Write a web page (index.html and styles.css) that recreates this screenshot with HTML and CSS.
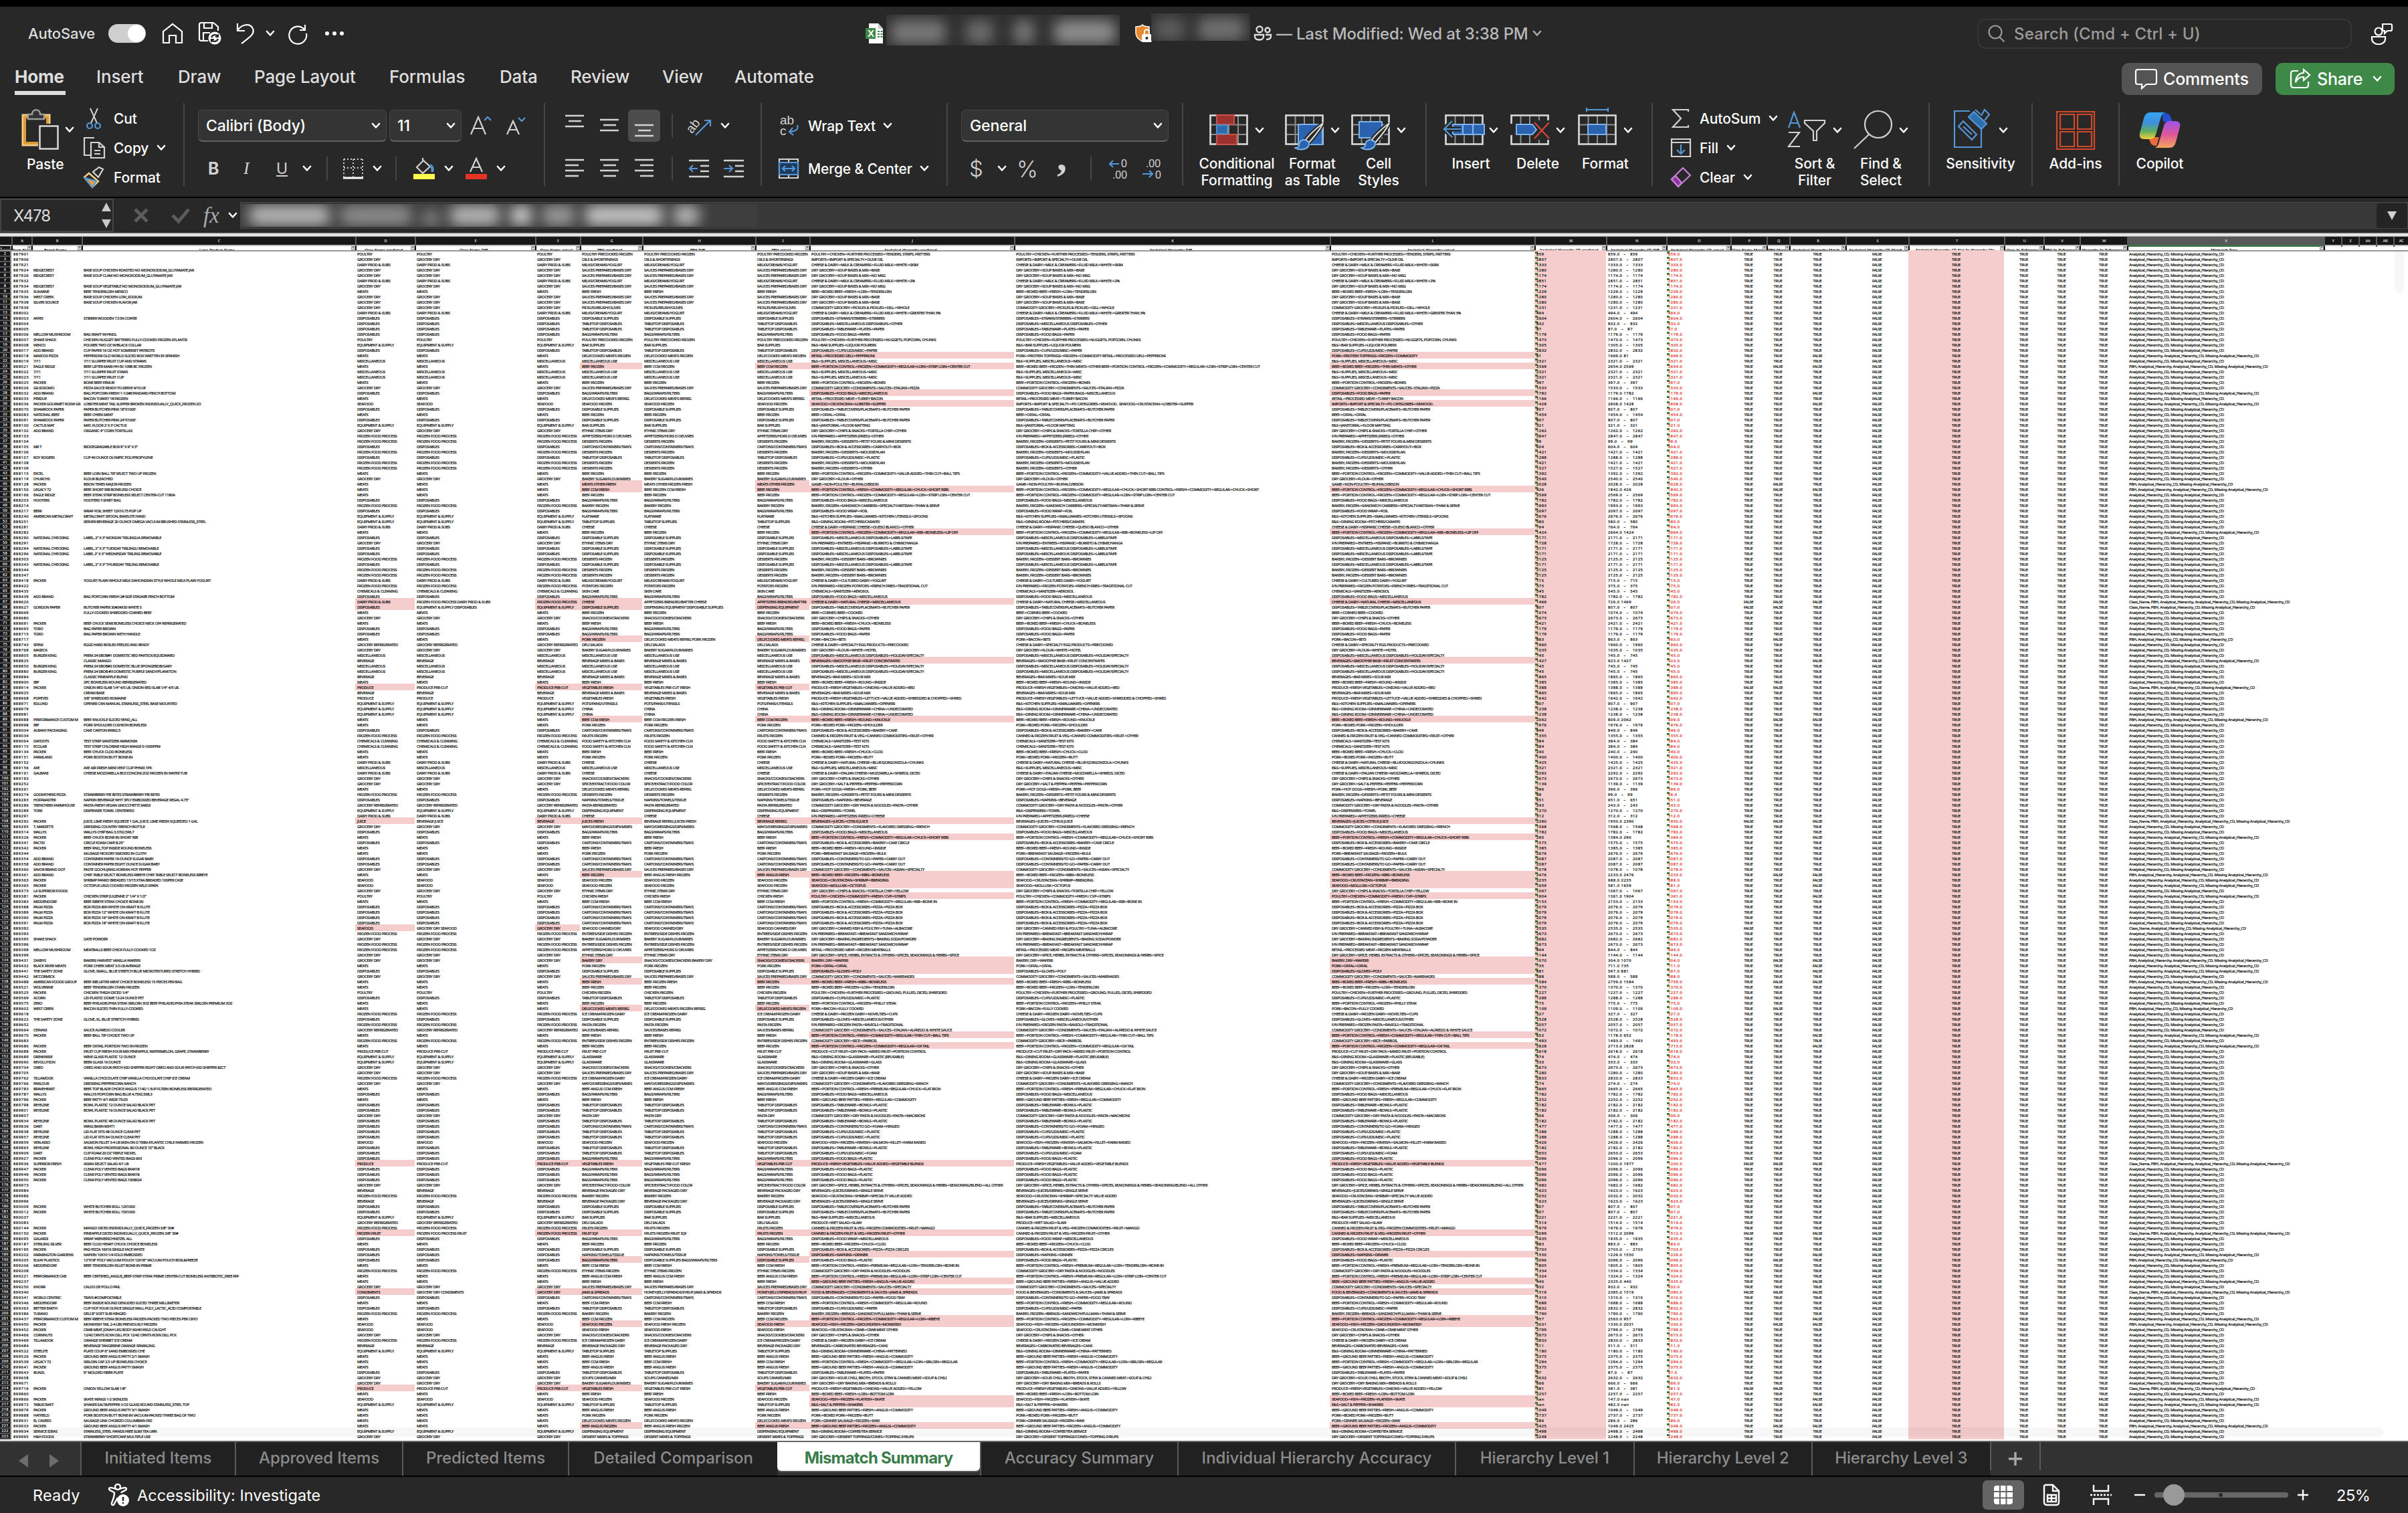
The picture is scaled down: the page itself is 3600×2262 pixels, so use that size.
FILE: index.html
```html
<!DOCTYPE html>
<html lang="en">
<head>
<meta charset="utf-8">
<title>Mismatch Summary</title>
<link rel="stylesheet" href="styles.css">
</head>
<body>
<svg class="defs" width="0" height="0">
  <symbol id="chev" viewBox="0 0 14 10"><path d="M2 2l5 5.5L12 2" fill="none" stroke="currentColor" stroke-width="2.6" stroke-linecap="round" stroke-linejoin="round"/></symbol>
  <symbol id="table" viewBox="0 0 58 46"><path d="M1.500 1.500h55v43h-55zM1 15.500h56M1 30h56M15.500 1v44M29 1v44M43 1v44" fill="none" stroke="#8d8d8d" stroke-width="2"/><path d="M1.500 1.500h55v43h-55z" fill="none" stroke="#d6d6d6" stroke-width="2.600"/></symbol>
  <symbol id="brush" viewBox="0 0 46 42"><path d="M43 1C34 8 22 19 17 26l5 4C29 22 39 10 43 1z" fill="#282828" stroke="#282828" stroke-width="6"/><path d="M43 1C34 8 22 19 17 26l5 4C29 22 39 10 43 1z" fill="#282828" stroke="#dcdcdc" stroke-width="2"/><path d="M16 26c-8-1-9 6-9 9-1 3-4 3-6 3 6 4 22 4 21-8z" fill="#2a62b0" stroke="#7db3ea" stroke-width="2"/></symbol>
</svg>

<header class="titlebar">
  <div class="quick">
    <span class="autosave">AutoSave</span>
    <span class="toggle"><i></i></span>
    <svg class="q-home" width="32" height="32" viewBox="0 0 32 32"><path d="M2 13L16 2l14 11v17h-9V19h-10v11H2z"/></svg>
    <svg class="q-save" width="36" height="36" viewBox="0 0 36 36"><path d="M15 29H5a3 3 0 0 1-3-3V5a3 3 0 0 1 3-3h18l7 6v6M9 2v8h12V2M8 28V17h10"/><circle cx="25" cy="25" r="9.500" fill="#fff" stroke="none"/><path d="M20 24c2-5 8-5 10-1m0-4v4h-4M30 26c-2 5-8 5-10 1m0 4v-4h4" stroke="#282828"/></svg>
    <svg class="q-undo" width="30" height="34" viewBox="0 0 30 34"><path d="M3 2v11h11M3 13C8 4 20 1 25 8c6 9-4 15-16 24"/></svg>
    <svg class="chev q-c"><use href="#chev"/></svg>
    <svg class="q-redo" width="32" height="32" viewBox="0 0 32 32"><path d="M27 3v8h-8M26 10A13 13 0 1 0 29 16"/></svg>
    <span class="dots"><i></i><i></i><i></i></span>
  </div>
  <div class="doc">
    <svg width="27" height="32" viewBox="0 0 27 32"><path d="M5 1h14l7 8v22H5z" fill="#fff"/><path d="M19 1v8h7z" fill="#ccc"/><path d="M18 12h3v2h-3zm4.500 0h3v2h-3zM18 16h3v2h-3zm4.500 0h3v2h-3zM18 20h3v2h-3zm4.500 0h3v2h-3z" fill="#3b8748"/><rect y="8" width="15" height="16" fill="#3b8748"/><text x="3" y="21" class="xl">X</text></svg>
    <span class="smudge name"><i></i><i></i><i></i><i></i></span>
    <svg class="shield" width="26" height="28" viewBox="0 0 26 28"><path d="M11 1c3 3 6 3 10 3v9c0 6-4 10-10 13C5 23 1 19 1 13V4c4 0 7 0 10-3z" fill="#e8882e" stroke="#fff" stroke-width="1.500"/><path d="M14 15v-3c0-5 7-5 7 0v3" fill="none" stroke="#fff" stroke-width="2"/><rect x="10" y="15" width="15" height="12" rx="2" fill="#fff"/><circle cx="17.500" cy="21" r="2" fill="#222"/></svg>
    <span class="smudge label"><i></i><i></i></span>
    <svg class="people" width="28" height="24" viewBox="0 0 28 24"><circle cx="9" cy="6" r="4.500"/><circle cx="21" cy="7" r="3.500"/><path d="M2 14h13v3c0 6-13 6-13 0zM18 14h8v2c0 4-3 5-7 5"/></svg>
    <span class="modified">— Last Modified: Wed at 3:38 PM</span>
    <svg class="chev dim"><use href="#chev"/></svg>
  </div>
  <div class="search">
    <svg width="27" height="28" viewBox="0 0 27 28"><circle cx="12" cy="11" r="9.500"/><path d="M18.500 18.500l7 7"/></svg>
    <span>Search (Cmd + Ctrl + U)</span>
  </div>
  <svg class="presence" width="34" height="34" viewBox="0 0 34 34"><circle cx="12" cy="13" r="5.500"/><path d="M2 21h20v3c0 11-20 11-20 0zM18 2h12q2 0 2 2v6q0 2-2 2h-5l-4 4v-4h-3z"/></svg>
</header>

<nav class="menubar">
  <b class="m-home">Home</b><span class="m-insert">Insert</span><span class="m-draw">Draw</span><span class="m-page">Page Layout</span><span class="m-form">Formulas</span><span class="m-data">Data</span><span class="m-rev">Review</span><span class="m-view">View</span><span class="m-auto">Automate</span>
  <div class="actions">
    <button class="comments"><svg width="34" height="32" viewBox="0 0 34 32"><path d="M4 2h25q3 0 3 3v16q0 3-3 3H17l-7 6v-6H4q-3 0-3-3V5q0-3 3-3z"/></svg>Comments</button>
    <button class="share"><svg width="32" height="32" viewBox="0 0 32 32"><path d="M13 4H6Q2 4 2 8v17q0 4 4 4h18q4 0 4-4v-5M21 2l9 8-9 8v-5c-6 0-9 2-12 8 0-8 5-14 12-14z"/></svg>Share<svg class="chev"><use href="#chev"/></svg></button>
  </div>
</nav>

<section class="ribbon">
  <div class="group clip">
    <div class="paste">
      <div class="row"><svg width="56" height="62" viewBox="0 0 56 62"><path d="M25 54H2V9h40v13" fill="none" stroke="#f2cf8b" stroke-width="3"/><path d="M25 51H5V12h34v10" fill="none" stroke="#e09a38" stroke-width="4"/><path d="M10 15V8h6c0-9 12-9 12 0h6v7z" fill="#333" stroke="#9a9a9a" stroke-width="2.500"/><path d="M27.500 25.500h27v34h-27z" fill="#282828" stroke="#d8d8d8" stroke-width="2.500"/></svg><svg class="chev"><use href="#chev"/></svg></div>
      <span>Paste</span>
    </div>
    <div class="stack">
      <div><svg width="34" height="34" viewBox="0 0 34 34"><path d="M11 2l10 22M22 2L12 24" fill="none" stroke="#cfcfcf" stroke-width="2"/><circle cx="10" cy="28" r="4"/><circle cx="22" cy="28" r="4"/></svg><span>Cut</span></div>
      <div><svg width="34" height="34" viewBox="0 0 34 34"><path d="M11 28H2V2h15" class="g"/><path d="M12 9h12l8 7v16H12zM24 9v7h8M17 21h9M17 26h9" class="g"/></svg><span>Copy</span><svg class="chev"><use href="#chev"/></svg></div>
      <div><svg width="34" height="34" viewBox="0 0 34 34"><path d="M9 11l14 12-9 9L2 17z" fill="#282828" stroke="#f0cf8a" stroke-width="2.500"/><path d="M3 18l17 5-6 9z" fill="#e3a040"/><path d="M15 9l9-7 6 3-7 12z" class="g"/></svg><span>Format</span></div>
    </div>
  </div>

  <div class="group font">
    <div class="line top">
      <span class="select face">Calibri (Body)<svg class="chev"><use href="#chev"/></svg></span>
      <span class="select size">11<svg class="chev"><use href="#chev"/></svg></span>
      <svg class="grow" width="34" height="32" viewBox="0 0 34 32"><path d="M2 29L13 3l11 26M6 20h14" class="g"/><path d="M22 8l5-5 5 5"/></svg>
      <svg class="shrink" width="32" height="32" viewBox="0 0 32 32"><path d="M2 29L11 9l9 20M5 22h12" class="g"/><path d="M19 4l5 5 5-5"/></svg>
    </div>
    <div class="line low">
      <b class="f-b">B</b><i class="f-i">I</i><u class="f-u">U</u><svg class="chev"><use href="#chev"/></svg><em class="bar"></em>
      <svg width="32" height="32" viewBox="0 0 32 32"><path d="M2 2h28M2 2v26M30 2v26M16 2v26M2 15h28" fill="none" stroke="#d0d0d0" stroke-width="2" stroke-dasharray="2 3"/><path d="M1 30h30" stroke="#fff" stroke-width="3"/></svg><svg class="chev c2"><use href="#chev"/></svg><em class="bar b2"></em>
      <svg class="bucket" width="34" height="34" viewBox="0 0 34 34"><path d="M16 5L6 15l9 9 11-10L15 4V1" class="g"/><path d="M26 12q5 3 3 10" stroke-width="4"/><path d="M1 25h32v8H1z" fill="#fbfb4c" stroke="none"/></svg><svg class="chev c2"><use href="#chev"/></svg>
      <svg class="ink" width="34" height="34" viewBox="0 0 34 34"><path d="M8 22l9-20 9 20M11 15h12" class="g"/><path d="M1 25h32v8H1z" fill="#e53424" stroke="none"/></svg><svg class="chev c2"><use href="#chev"/></svg>
    </div>
  </div>

  <div class="group align">
    <div class="line top">
      <svg class="al" viewBox="0 0 48 48"><path d="M10 9h28M15 17h19M10 25h28"/></svg><svg class="al" viewBox="0 0 48 48"><path d="M10 15h28M15 23h19M10 31h28"/></svg><svg class="al on" viewBox="0 0 48 48"><path d="M10 23h28M15 31h19M10 39h28"/></svg>
      <em class="bar"></em>
      <svg class="orient" width="34" height="34" viewBox="0 0 34 34"><text x="-4" y="20" transform="rotate(-52 10 16)" class="ab">ab</text><path d="M10 31L32 9M23 9h9v9"/></svg><svg class="chev c2"><use href="#chev"/></svg>
    </div>
    <div class="line low">
      <svg class="al" viewBox="0 0 48 48"><path d="M10 11h28M10 19h20M10 27h28M10 35h20"/></svg><svg class="al" viewBox="0 0 48 48"><path d="M10 11h28M15 19h19M10 27h28M15 35h19"/></svg><svg class="al" viewBox="0 0 48 48"><path d="M10 11h28M18 19h20M10 27h28M18 35h20"/></svg>
      <em class="bar"></em>
      <svg class="ind" width="30" height="28" viewBox="0 0 30 28"><path d="M0 2h30M17 10h13M17 18h13M0 26h30" class="g3"/><path d="M13 14H2M6 9l-5 5 5 5"/></svg><svg class="ind" width="30" height="28" viewBox="0 0 30 28"><path d="M0 2h30M17 10h13M17 18h13M0 26h30" class="g3"/><path d="M0 14h12M8 9l5 5-5 5"/></svg>
    </div>
  </div>

  <div class="group wrap">
    <div class="line top"><svg width="32" height="34" viewBox="0 0 32 34"><text x="3" y="15" class="ab">ab</text><text x="3" y="31" class="ab">c</text><path d="M29 16q3 9-11 10M22 20l-5 6 6 5" /></svg><span>Wrap Text</span><svg class="chev"><use href="#chev"/></svg></div>
    <div class="line low"><svg width="32" height="32" viewBox="0 0 32 32"><path d="M2 2h28v28H2zM16 2v5M16 25v5" class="g"/><path d="M2 7h28v18H2zM7 16h18M11 12l-4 4 4 4M21 12l4 4-4 4" fill="#1d3c5c"/></svg><span>Merge &amp; Center</span><svg class="chev"><use href="#chev"/></svg></div>
  </div>

  <div class="group number">
    <div class="line top"><span class="select">General<svg class="chev"><use href="#chev"/></svg></span></div>
    <div class="line low"><span class="dollar">$</span><svg class="chev"><use href="#chev"/></svg><span class="pct">%</span><span class="comma">,</span><em class="bar"></em>
      <svg width="34" height="32" viewBox="0 0 34 32"><text x="20" y="14" class="dg">0</text><text x="7" y="31" class="dg">.00</text><path d="M17 9H3M8 4L3 9l5 5"/></svg>
      <svg class="dec" width="34" height="32" viewBox="0 0 34 32"><text x="6" y="14" class="dg">.00</text><text x="20" y="31" class="dg">0</text><path d="M1 24h15M11 19l5 5-5 5"/></svg>
    </div>
  </div>

  <div class="group styles">
    <div class="big"><div class="row"><svg width="58" height="60" viewBox="0 0 58 60"><use href="#table" y="6" width="58" height="46"/><path d="M11 7h26v14H11zM11 36h30v15H11z" fill="#9b322d" stroke="#c9534c" stroke-width="2"/><path d="M11 22h16v13H11z" fill="#2f69a8" stroke="#4a8fd0" stroke-width="2"/></svg><svg class="chev"><use href="#chev"/></svg></div><span>Conditional<br>Formatting</span></div>
    <div class="big"><div class="row"><svg width="60" height="60" viewBox="0 0 60 60"><use href="#table" y="6" width="58" height="46"/><path d="M20 21h36v30H20z" fill="#2a62b0" stroke="#7db3ea" stroke-width="2"/><use href="#brush" x="14" y="18" width="46" height="42"/></svg><svg class="chev"><use href="#chev"/></svg></div><span>Format<br>as Table</span></div>
    <div class="big"><div class="row"><svg width="60" height="60" viewBox="0 0 60 60"><use href="#table" y="6" width="58" height="46"/><path d="M12 17h34v24H12z" fill="#2a62b0" stroke="#7db3ea" stroke-width="2"/><use href="#brush" x="14" y="18" width="46" height="42"/></svg><svg class="chev"><use href="#chev"/></svg></div><span>Cell<br>Styles</span></div>
  </div>

  <div class="group cells">
    <div class="big"><div class="row"><svg width="62" height="60" viewBox="0 0 62 60"><use href="#table" x="2" y="6" width="58" height="46"/><path d="M14 21h47v15H14z" fill="#2a62b0" stroke="#7db3ea" stroke-width="2"/><path d="M29 21v15M44 21v15" stroke="#7db3ea"/><path d="M26 28H2M13 16L1 28l12 12" stroke="#282828" stroke-width="7"/><path d="M26 28H2M13 16L1 28l12 12"/></svg><svg class="chev"><use href="#chev"/></svg></div><span>Insert</span></div>
    <div class="big"><div class="row"><svg width="58" height="60" viewBox="0 0 58 60"><use href="#table" y="6" width="58" height="46"/><path d="M0 20h9v17H0zM32 15h26v29H32z" fill="#282828" stroke="none"/><path d="M9 21h24l6 8-6 7H9z" fill="#2a62b0" stroke="#7db3ea" stroke-width="2"/><path d="M36 18l22 24M58 18L36 42" stroke="#d8433c"/></svg><svg class="chev"><use href="#chev"/></svg></div><span>Delete</span></div>
    <div class="big"><div class="row"><svg width="58" height="60" viewBox="0 0 58 60"><use href="#table" y="6" width="58" height="46"/><path d="M15 21h27v15H15z" fill="#2a62b0" stroke="#7db3ea" stroke-width="2"/><path d="M13-4v6M45-4v6M13-1h32"/></svg><svg class="chev"><use href="#chev"/></svg></div><span>Format</span></div>
  </div>

  <div class="group edit">
    <div class="stack">
      <div><svg width="32" height="32" viewBox="0 0 32 32"><path d="M27 6V3H4l12 13L4 29h23v-3" class="g"/></svg><span>AutoSum</span><svg class="chev"><use href="#chev"/></svg></div>
      <div><svg width="32" height="32" viewBox="0 0 32 32"><path d="M2 3h28v26H2zM2 8h28" class="g"/><path d="M16 11v14M10 19l6 6 6-6"/></svg><span>Fill</span><svg class="chev"><use href="#chev"/></svg></div>
      <div><svg width="32" height="32" viewBox="0 0 32 32"><path d="M19 2l11 11-18 17L2 19z" stroke="#c97fd6"/><path d="M8 14l9 10-5 6L2 19z" fill="#8c35a0" stroke="#c97fd6"/></svg><span>Clear</span><svg class="chev"><use href="#chev"/></svg></div>
    </div>
    <div class="big"><div class="row"><svg width="58" height="60" viewBox="0 0 58 60"><path d="M2 26L10 3l9 23M5 19h11"/><path d="M2 33h16L2 54h17M26 15h30v4L44 31v14h-5V31L26 19z" class="g"/></svg><svg class="chev"><use href="#chev"/></svg></div><span>Sort &amp;<br>Filter</span></div>
    <div class="big"><div class="row"><svg width="60" height="60" viewBox="0 0 60 60"><circle cx="37" cy="21" r="20" class="g"/><path d="M23 36L1 57" class="g"/></svg><svg class="chev"><use href="#chev"/></svg></div><span>Find &amp;<br>Select</span></div>
  </div>

  <div class="group sens"><div class="big"><div class="row"><svg width="56" height="60" viewBox="0 0 56 60"><path d="M25 1H2v54h40V28"/><path d="M8 24l7-8 20 20-7 8zM15 24l13 12"/><path d="M23 10l8-8 19 18-8 8z" fill="#2f6fae"/><path d="M33-1l8 7M42 8l5-9 7 7-7 9"/></svg><svg class="chev"><use href="#chev"/></svg></div><span>Sensitivity</span></div></div>
  <div class="group addins"><div class="big"><div class="row"><svg width="60" height="60" viewBox="0 0 60 60"><path d="M2 2h56v56H2zM7 6h21v22H7zM33 6h21v22H33zM7 32h21v22H7zM33 32h21v22H33z" stroke="#d0492b" stroke-width="2.200"/></svg></div><span>Add-ins</span></div></div>
  <div class="group copilot"><div class="big"><div class="row"><svg width="62" height="60" viewBox="0 0 62 60"><defs><linearGradient id="ca" x1="0" y1="0" x2="0" y2="1"><stop offset="0" stop-color="#35a5f0"/><stop offset=".4" stop-color="#3f8fdc"/><stop offset=".7" stop-color="#5fae62"/><stop offset="1" stop-color="#f3cf3a"/></linearGradient><linearGradient id="cb" x1="0" y1="0" x2="0" y2="1"><stop offset="0" stop-color="#9a55e8"/><stop offset=".5" stop-color="#e0569a"/><stop offset="1" stop-color="#f2a65c"/></linearGradient></defs><path d="M34 4h6q5 0 7 6l3 7H36z" fill="#2450cf" stroke="none"/><path d="M14 40h16l-4 13h-2q-6 0-8-7z" fill="#ea6a3c" stroke="none"/><path d="M17 3h23q-5 0-7 6l-8 27q-2 7-8 7H8q-9 0-7-9l6-22q2-9 10-9z" fill="url(#ca)" stroke="none"/><path d="M45 56H22q5 0 7-6l8-27q2-7 8-7h9q9 0 7 9l-6 22q-2 9-10 9z" fill="url(#cb)" stroke="none"/></svg></div><span>Copilot</span></div></div>
</section>

<section class="formulabar">
  <div class="namebox"><span>X478</span><svg width="16" height="38" viewBox="0 0 16 38"><path d="M8 0l7 13H1zM8 38l7-13H1z" fill="#c9c9c9"/></svg></div>
  <svg class="fx-x" width="22" height="22" viewBox="0 0 22 22"><path d="M2 2l18 18M20 2L2 20"/></svg>
  <svg class="fx-v" width="28" height="22" viewBox="0 0 28 22"><path d="M2 11l9 9L26 2"/></svg>
  <span class="fx">fx</span><svg class="chev"><use href="#chev"/></svg>
  <div class="field"><span class="smudge formula"><i></i><i></i><i></i><i></i><i></i><i></i><i></i><i></i></span><span class="expand"><svg width="16" height="13" viewBox="0 0 16 13"><path d="M1 0h14L8 13z" fill="#d0d0d0"/></svg></span></div>
</section>

<main class="sheet">
  <div class="rule"></div>
  <div class="cols" id="cols"></div>
  <div class="cols names" id="names"></div>
  <div id="rows" class="rows"></div>
  <div class="hscroll"></div><div class="vscroll"></div>
</main>

<footer>
  <div class="tabs">
    <div class="nav"><svg width="62" height="22" viewBox="0 0 62 22"><path d="M15 1v20L1 11zM47 1v20l14-10z" fill="#6d6d6d"/></svg></div>
    <span class="t1">Initiated Items</span><span class="t2">Approved Items</span><span class="t3">Predicted Items</span><span class="t4">Detailed Comparison</span><b class="t5">Mismatch Summary</b><span class="t6">Accuracy Summary</span><span class="t7">Individual Hierarchy Accuracy</span><span class="t8">Hierarchy Level 1</span><span class="t8">Hierarchy Level 2</span><span class="t8">Hierarchy Level 3</span>
    <div class="add"><svg width="22" height="22" viewBox="0 0 22 22"><path d="M11 1v20M1 11h20" stroke="#a8a8a8" stroke-width="3.500"/></svg></div>
  </div>
  <div class="status">
    <span class="ready">Ready</span>
    <svg class="acc" width="32" height="36" viewBox="0 0 32 36"><circle cx="14" cy="6" r="4"/><path d="M11 9C5 7 1 6 1 9s8 4 8 6-1 8-4 15c-1 4 3 4 4 1l5-9M17 9c6-2 10-3 10 0s-7 3-8 6"/><circle cx="22" cy="26" r="9" fill="#fff" stroke="none"/><path d="M22 21v6M22 29v2" stroke="#222" stroke-width="2.500"/></svg>
    <span>Accessibility: Investigate</span>
    <div class="views">
      <span class="grid"><svg width="28" height="28" viewBox="0 0 28 28"><rect width="28" height="28" rx="4" fill="#fff"/><path d="M0 9h28M0 18.500h28M9 0v28M18.500 0v28" stroke="#646464" stroke-width="2"/></svg></span>
      <svg class="v-page" width="26" height="34" viewBox="0 0 26 34"><path d="M4 2h11l9 9v17q0 4-4 4H6q-4 0-4-4V5q0-3 3-3M15 2v9h9M7 17h13v10H7zM13 17v10M7 22h13"/></svg>
      <svg class="v-break" width="32" height="34" viewBox="0 0 32 34"><path d="M5 2v9h22V2M5 32v-9h22v9"/><path d="M0 17h32" stroke-dasharray="3 2"/></svg>
      <svg class="v-minus" width="18" height="18" viewBox="0 0 18 18"><path d="M1 9h16"/></svg>
      <span class="slider"><i></i><b></b></span>
      <svg class="v-plus" width="18" height="18" viewBox="0 0 18 18"><path d="M1 9h16M9 1v16"/></svg>
      <span class="zoom">25%</span>
    </div>
  </div>
</footer>
<script src="sheet.js"></script>
</body>
</html>
```
FILE: styles.css
```css
*{box-sizing:border-box}
body{margin:0;width:3600px;height:2262px;overflow:hidden;background:#282828;color:#fff;font-family:Inter,"Liberation Sans",sans-serif;font-size:22px;display:flex;flex-direction:column}
.defs{position:absolute}
svg{flex:none;overflow:visible}
.chev{width:14px;height:10px;color:#fff}
.titlebar{height:88px;border-top:10px solid #000;display:flex;position:relative;flex:none}
.titlebar svg{fill:none;stroke:#fff;stroke-width:2.2}
.quick{display:flex;align-items:center;height:80px;width:1294px;padding-left:42px;flex:none}
.autosave{width:120px;color:#dcdcdc;font-weight:500;font-size:22px;letter-spacing:-.1px}
.toggle{width:56px;height:28px;border-radius:14px;background:#cfcfcf;display:flex;justify-content:flex-end;padding:1px}
.toggle i{width:26px;height:26px;border-radius:13px;background:#fff}
.q-home{margin-left:24px}.q-save{margin-left:22px}.q-undo{margin-left:20px}.q-c{margin-left:15px}.q-redo{margin-left:18px}
.dots{display:flex;gap:5px;margin-left:25px}.dots i{width:6px;height:6px;border-radius:3px;background:#fff}
.doc{display:flex;align-items:center;height:80px;width:1662px;flex:none}
.doc svg{stroke:none}
.xl{font:700 15px "Liberation Sans",sans-serif;fill:#fff}
.smudge{display:flex;overflow:hidden;background:#303030}
.smudge i{filter:blur(10px);background:#777;border-radius:12px}
.name{width:349px;height:46px;margin:-10px 0 0 4px;padding:8px 6px 2px;gap:30px}
.name i{width:90px}.name i:nth-child(2){width:44px;background:#6b6b6b}.name i:nth-child(4){width:100px;background:#8c8c8c}.name i:nth-child(3){width:34px}
.shield{margin-left:23px}
.label{width:148px;height:41px;margin:-20px 0 0 -2px;padding:6px 4px 0;gap:20px}.label i{width:46px;background:#5c5c5c}.label i+i{width:70px;background:#707070}
.doc .people{margin-left:5px;stroke:#ddd;stroke-width:2.4}
.modified{margin-left:6px;color:#b9b9b9;font-size:24px;width:383px;white-space:nowrap;letter-spacing:-.2px;font-weight:500}
.doc .dim{stroke:none;color:#aaa}
.search{width:560px;height:45px;margin-top:18px;border:2px solid #353535;border-radius:12px;display:flex;align-items:center;padding-left:13px;color:#9b9b9b;font-size:24px;font-weight:500;gap:13px;letter-spacing:.15px;flex:none}
.search svg{stroke:#9b9b9b}
.presence{margin:24px 0 0 28px}

.menubar{height:66px;flex:none;position:relative;display:flex;align-items:flex-start;padding:12px 0 0 22px;font-size:26px;font-weight:500;color:#dedede;white-space:nowrap;letter-spacing:-.15px;line-height:30px}
.menubar b{width:76px;height:42px;border-bottom:6px solid #dedede;font-weight:700;letter-spacing:-.2px}
.m-insert{margin-left:46px;width:122px}.m-draw{width:114px}.m-page{width:202px}.m-form{width:165px}.m-data{width:106px}.m-rev{width:137px}.m-view{width:108px}
.actions{display:flex;margin:-6px 20px 0 auto;gap:20px}
button{height:48px;border:0;border-radius:11px;color:#fff;font:500 25px Inter,sans-serif;display:flex;align-items:center;letter-spacing:-.2px;padding:0}
button svg{fill:none;stroke:#fff;stroke-width:2.2}
.comments{width:210px;background:#545454;padding-left:20px;gap:8px}
.share{width:178px;background:#3e8948;padding-left:21px;gap:9px}.share .chev{margin-left:6px;stroke:none}

.ribbon{height:140px;flex:none;display:flex;border-bottom:0;font-weight:500;font-size:21px;letter-spacing:-.1px}
.ribbon svg{fill:none;stroke:#5596d6;stroke-width:2.2}
.ribbon .chev{stroke:none}
.ribbon .g{stroke:#d2d2d2;fill:none}.ribbon .g3{stroke:#d2d2d2;stroke-width:2.6}
.group{height:124px;border-right:2px solid #464646;flex:none;white-space:nowrap}
.line{display:flex;align-items:center;height:48px}
.top{margin-top:10px}.low{margin-top:16px}
.bar{width:2px;height:36px;background:#464646}
.row{display:flex;align-items:center;justify-content:space-between;height:62px;width:82px}
.select{height:48px;background:#343434;border:1px solid #474747;border-bottom:2px solid #626262;border-radius:7px;display:flex;align-items:center;justify-content:space-between;padding:0 8px 0 11px;font-size:23px}
.big{display:flex;flex-direction:column;align-items:center;padding-top:10px;text-align:center;line-height:24.500px}
.big>span{margin-top:7px}
.stack{display:flex;flex-direction:column;gap:10px}
.stack div{height:34px;display:flex;align-items:center}
.clip{width:276px;display:flex}
.paste{width:92px;margin-left:32px;padding-top:9px}.paste .row{width:79px}.paste span{display:block;margin:8px 0 0 8px}
.clip .stack{padding-top:6px}.clip .stack span{margin:0 12px}
.font{width:539px}
.font .top{padding-left:20px}.face{width:282px}.size{width:108px;margin-left:4px}.grow{margin-left:12px}.shrink{margin-left:20px}
.font .low{padding-left:35px;color:#d0d0d0}.f-b{font-size:25px;width:53px}.f-i{font:italic 26px "Liberation Serif",serif;width:49px}.f-u{width:39px;font-size:23px;font-weight:400}
.font .bar{margin:0 22px}.font .bar.b2{margin:0 24px 0 20px}.c2{margin-left:13px}.ink{margin-left:17px}
.align{width:324px}.align .line{padding-left:20px}.al{width:48px;height:48px;margin-right:4px}
.ribbon .al{stroke:#d2d2d2;stroke-width:2.6}.on{background:#4c4c4c;border-radius:6px}
.align .bar{margin:0 24px 0 13px}.ind+.ind{margin-left:22px}
.ab{font:19px "Liberation Sans",sans-serif;fill:#d2d2d2;stroke:none}
.wrap{width:278px}.wrap .line{padding-left:24px}.wrap span{margin:0 11px 0 13px}
.number{width:352px;padding-left:20px}.number .select{width:310px;padding-left:12px}
.number .low{padding-left:12px;color:#d2d2d2}.dollar{width:42px;font-size:33px;font-weight:300}.pct{font-size:34px;font-weight:300;width:58px;margin-left:15px}.comma{font:700 60px/20px "Liberation Serif",serif;width:26px;margin:-34px 24px 0 2px}
.number .bar{margin-right:24px}.dec{margin-left:17px}
.dg{font:16px "Liberation Sans",sans-serif;fill:#d2d2d2;stroke:none}
.styles{width:364px;padding-left:23px;display:grid;grid-template-columns:114px 112px 86px}
.cells{width:338px;padding-left:16px;display:grid;grid-template-columns:100px 100px 102px}
.edit{width:414px;padding-left:26px;display:grid;grid-template-columns:167px 98px 100px}.edit .stack{padding-top:6px}.edit .stack span{margin:0 12px}
.sens{width:154px}.addins{width:130px}.addins .row,.copilot .row{justify-content:center}.copilot{border:0;width:120px}

.formulabar{height:54px;border-top:2px solid #000;display:flex;align-items:center;flex:none}
.namebox{width:170px;height:50px;border:2px solid #444;display:flex;align-items:center;justify-content:space-between;padding:0 1px 0 18px;font-size:24px;color:#dcdcdc;letter-spacing:-1px}
.fx-x,.fx-v{fill:none;stroke:#5c5c5c;stroke-width:5}.fx-x{margin-left:30px}.fx-v{margin-left:34px}
.fx{font:italic 33px "Liberation Serif",serif;color:#aaa;margin-left:20px;width:37px}
.field{margin-left:4px;flex:1;height:40px;background:#383838;border:1px solid #454545;display:flex;align-items:center;justify-content:space-between}
.formula{width:772px;height:34px;background:#3e3e3e;padding:2px 12px;gap:14px}
.formula i{background:#b5b5b5;width:122px;flex:none}.formula i:nth-child(2){width:108px;background:#8c8c8c}.formula i:nth-child(3){width:28px;background:#8a8a8a;margin-top:8px}.formula i:nth-child(4){width:76px}.formula i:nth-child(5){width:34px;background:#c8c8c8}.formula i:nth-child(6){width:50px;background:#999}.formula i:nth-child(7){width:118px;background:#c4c4c4}.formula i:nth-child(8){width:40px}
.expand{width:46px;height:37px;background:#242424;border-radius:4px;display:flex;align-items:center;justify-content:center}

.sheet{height:1806px;background:#fff;overflow:hidden;position:relative;flex:none;color:#111;font-family:"Noto Sans","Open Sans",sans-serif;font-size:5.7px;letter-spacing:-.3px}
.rule{height:6px;background:linear-gradient(#8f8f8f,#e9e9e9 40%,#fff 55%,#8f8f8f)}
.cols,.r{display:grid;grid-template-columns:17px 30px 75px 409px 89px 180px 67px 93px 169px 81px 306px 472px 306px 107px 90px 96px 54px 34px 84px 94px 143px 59px 54px 71px 294px 26px 26px 26px 26px 22px}
.cols{height:14px;background:#171717;color:#ddd;border-bottom:2px solid #bfbfbf}
.cols span{border-left:2px solid #5c5c5c;text-align:center;line-height:12px;font-weight:600}
.cols span.sel{background:#585858;border-bottom:3px solid #3d7348}
.cols span:first-child{border:0}
.names{height:8px;background:#fff;color:#111;border-bottom:2px solid #999}
.names div{border-left:2px solid #111;display:flex;height:6px;overflow:hidden;justify-content:space-between}
.names em{font-style:normal;font-weight:700;flex:1;text-align:center;line-height:8px;padding-top:2px;white-space:nowrap;overflow:hidden}
.names s{width:6px;background:#ddd;border:1px solid #999;display:flex;justify-content:center}
.names s::after{content:"";border:1.500px solid transparent;border-top:3px solid #555;height:0}
.names .n,.rows .n{background:#171717;color:#eee;text-align:center;border-right:2px solid #8a8a8a;border-left:0;border-bottom:2px solid #555;font-weight:600;letter-spacing:.3px;padding:0}
.r{height:8px;line-height:8px;white-space:nowrap;-webkit-text-stroke:.22px currentColor}
.r span{padding-left:3px;overflow:hidden;height:8px}
.r .n{line-height:7px;-webkit-text-stroke:0}
.r .c{text-align:center;padding:0}
.r .k{letter-spacing:.6px}
.r .p{background:#f6cdcd;box-shadow:0 -2px #f6cdcd}
.r .t{border:0;background-image:linear-gradient(#3a7f2a,#3a7f2a);background-size:4px 3px;background-position:1px 0;background-repeat:no-repeat}
.r .o{color:#e5302b}
.r .w{word-spacing:4px}
.r .x{letter-spacing:-.2px}
.hscroll,.vscroll{position:absolute;background:rgba(0,0,0,.03);border-radius:7px}
.hscroll{left:20px;top:1786px;width:3543px;height:14px}
.vscroll{left:3580px;top:24px;width:14px;height:66px}

footer{flex:none;height:108px}
.tabs{height:54px;border-top:2px solid #666;border-bottom:2px solid #000;background:#323232;display:flex;color:#8b8b8b;font-size:24px;font-weight:500;letter-spacing:-.1px}
.nav{width:120px;padding:16px 0 0 27px}
.tabs span,.tabs b{border-left:2px solid #5a5a5a;background:#212121;text-align:center;line-height:48px;height:50px;white-space:nowrap;box-shadow:none}
.tabs b{background:#fff;color:#3a7d4b;border:0;height:43px;border-radius:0 0 6px 6px;box-shadow:0 2px #5a5a5a;font-weight:700;letter-spacing:-.8px}
.t1{width:231px}.t2{width:250px}.t3{width:248px}.t4{width:313px}.t5{width:303px}.t6{width:295px}.t7{width:415px}.tabs .t7{letter-spacing:0}.t8{width:266.500px}
.add{border-left:2px solid #5a5a5a;border-right:2px solid #5a5a5a;width:76px;height:42px;padding:13px 0 0 25px}
.status{height:54px;display:flex;align-items:center;padding-left:49px;font-size:23.500px}
.status svg{fill:none;stroke:#fff;stroke-width:2.4}
.ready{width:113px;letter-spacing:.2px}.acc{margin-right:11px}
.views{margin-left:auto;display:flex;align-items:center;width:636px}
.grid{width:62px;height:44px;border-radius:7px;background:#646464;display:flex;align-items:center;justify-content:center}
.grid svg{stroke:none}
.v-page{margin-left:28px}.v-break{margin-left:45px}.v-minus{margin-left:33px}.v-plus{margin-left:13px}
.slider{width:200px;height:8px;background:#666;border-radius:4px;margin-left:13px;display:flex;align-items:center;padding-left:13px}
.slider i{width:32px;height:32px;border-radius:16px;background:#999}.slider b{width:6px;height:6px;border-radius:3px;background:#2b2b2b;margin-left:51px}
.zoom{margin-left:41px;letter-spacing:-.4px}
```
FILE: sheet.js
```js
const CLASS = {P:'POULTRY',G:'GROCERY DRY',D:'DAIRY PROD & SUBS',M:'MEATS',S:'DISPOSABLES',E:'EQUIPMENT & SUPPLY',X:'MISCELLANEOUS',F:'FROZEN FOOD PROCESS',A:'SEAFOOD',C:'CHEMICALS & CLEANING',R:'GROCERY REFRIGERATED',B:'BEVERAGE',O:'PRODUCE',OC:'PRODUCE PRE-CUT',J:'JUICE',FF:'FROZEN FRUIT',CO:'CONDIMENTS'};
const PBH = {PP:'POULTRY PRECOOKED FROZEN',TD:'TABLETOP DISPOSABLES',DS:'DISPOSABLE SUPPLIES',BW:'BAGS/WRAPS/FILTERS',CC:'CARTONS/CONTAINERS/TRAYS',BF:'BEEF FROZEN',BR:'BEEF FRESH',SP:'SAUCES PREPARED/BASES DRY',MU:'MISCELLANEOUS USE',DF:'DESSERTS FROZEN',SC:'SNACKS/COOKIES/CRACKERS',CM:'BEEF CCM FRESH',CF:'BEEF CCM FROZEN',AF:'BEEF ANGUS FRESH',PF:'PORK FROZEN',MC:'MILKS/CREAMS/YOGURT',DM:'DELI/COOKED MEATS FROZEN',DR:'DELI/COOKED MEATS REFRIG',BS:'BAR SUPPLIES',EI:'ETHNIC ITEMS DRY',ES:'ENTREES/SIDE DISHES FROZEN',BX:'BEVERAGE MIXES & BASES',BD:'BAKERY SUGAR/FLOUR/MIXES',SF:'SEAFOOD FROZEN',VF:'VEGETABLES FRESH',VP:'VEGETABLES PRE-CUT',DE:'DISPENSING EQUIPMENT',TS:'TABLETOP SUPPLIES',NT:'NAPKINS/TOWELS/TISSUE',BP:'BEVERAGE PACKAGED DRY',IC:'ICE CREAM/FROZEN DAIRY',MD:'MAYO/DRESSINGS/DIPS/MIXES'};
// id | brand | product | class | PBH | hierarchy ; "a~b" = predicted~actual, "!" = hierarchy mismatch
const DATA = `887901|||P|PP|POULTRY>CHICKEN>FURTHER PROCESSED>TENDERS, STRIPS, FRITTERS
887906|||G|OILS & SHORTENINGS|IMPORTS>IMPORT & SPECIALTY>OLIVE OIL
887921|||D|MC|CHEESE & DAIRY>MILK & CREAMERS>FLUID MILK>WHITE>SKIM
887924|RIDGECREST|BASE SOUP CHICKEN ROASTED NO MONOSODIUM_GLUTAMATE JAR|G|SP|DRY GROCERY>SOUP BASES & MIX>BASE
887926|RIDGECREST|BASE SOUP CLAM NO MONOSODIUM_GLUTAMATE JAR|G|SP|DRY GROCERY>SOUP BASES & MIX>NO MSG
887932|||D|MC|CHEESE & DAIRY>MILK & CREAMERS>FLUID MILK>WHITE>2%
887934|RIDGECREST|BASE SOUP VEGETABLE NO MONOSODIUM_GLUTAMATE JAR|G|SP|DRY GROCERY>SOUP BASES & MIX>NO MSG
887935|SUKARNE|BEEF TENDERLOIN MEXICO|M|BR|BEEF>BOXED BEEF>FRESH>LOIN>TENDERLOIN
887936|WEST CREEK|BASE SOUP CHICKEN LOW_SODIUM|G|SP|DRY GROCERY>SOUP BASES & MIX>BASE
887938|SILVER SOURCE|BASE SOUP CHICKEN FLAVOR JAR|G|SP|DRY GROCERY>SOUP BASES & MIX>BASE
887939|||G|PICKLES/RELISH/OLIVES|COMMODITY GROCERY>PICKLES & PICKLED>DILL>WHOLE
888002|||D|MC|CHEESE & DAIRY>MILK & CREAMERS>FLUID MILK>WHITE>GREATER THAN 3%
888003|AFFEX|STIRRER WOODEN 7.5 IN COFFEE|S|DS|DISPOSABLES>STRAWS/STIRRERS>STIRRERS
888004|||S|TD|DISPOSABLES>MISCELLANEOUS DISPOSABLES>OTHER
888005|||S|TD|DISPOSABLES>TABLEWARE>PLATES>PAPER
888006|MELLOW MUSHROOM|BAG KRAFT W/HNDL|S|BW|DISPOSABLES>FOOD BAGS>PAPER
888007|SHAKE SHACK|CHICKEN NUGGET BATTERED FULLY-COOKED FROZEN ATLANTIS|P|PP|POULTRY>CHICKEN>FURTHER PROCESSED>NUGGETS, POPCORN, CHUNKS
888008|WINCO|POURER TWO OZ W/BLACK COLLAR|E|BS|E&S>BAR SUPPLIES>LIQUOR POURERS
888017|ADD BRAND|CUP PAPER 16 OZ HOT SOMERSET PATRIOTS|S|TD|DISPOSABLES>CUPS/LIDS/MISC>PAPER
888018|MARCOS PIZZA|PEPPERONI OLD WORLD SLICED BOX WRITTEN IN SPANISH|M|DM|!RETAIL>PROCESSED DELI>PEPPERONI=PORK>PROTEIN TOPPINGS>FROZEN>COMMODITY
888019|7/11|7/11 SLURPEE FRUIT CUP AND STRAWS|X|MU|E&S>SUPPLIES, MISCELLANEOUS>MISC
888021|EAGLE RIDGE|BEEF LIFTER MARI HH-50 109B BC FROZEN|M|BF~CF|!BEEF>PORTION CONTROL>FROZEN>COMMODITY>REGULAR>LOIN>STRIP LOIN>CENTER CUT=BEEF>BOXED BEEF>FROZEN>THIN MEATS>OTHER
888022|7/11|7/11 SLURPEE FRUIT STAWS|X|MU|E&S>SUPPLIES, MISCELLANEOUS>MISC
888023|7/11|7/11 SLURPEE FRUIT CUP|X|MU|E&S>SUPPLIES, MISCELLANEOUS>MISC
888025|PACKER|BONE BEEF FEMUR|M|BF|BEEF>PORTION CONTROL>FROZEN>BONES
888026|GILSOSOMO|PIZZA SAUCE READY-TO-SERVE 4/10 LB|G|SP|COMMODITY GROCERY>CONDIMENTS>SAUCES>ITALIAN>PIZZA
888032|ADD BRAND|BAG POPCORN FRESH 1-1/2#STANDARD PINCH BOTTOM|S|BW|!DISPOSABLES>FOOD BAGS>MISCELLANEOUS=DISPOSABLES>FOOD BAGS>PAPER
888033|PERDUE|BACON TURKEY 18 FROZEN|M|DR|RETAIL>PROCESSED MEAT>TURKEY BACON
888036|PACKER GOURMET ROSW GR|LOBSTER MEAT TAIL SLIPPER BROKEN INDIVIDUALLY_QUICK_FROZEN 2O|A|SF|!SEAFOOD>CRUSTACEAN>LOBSTER>SLIPPER=IMPORTS>IMPORT & SPECIALTY>PO CATEGORIES>SEAFOOD .
888070|SHAMROCK PAPER|PAPER BUTCHER PINK 18"X1000'|S|DS|DISPOSABLES>TABLECOVERS/PLACEMATS>BUTCHER PAPER
888083|NATIONAL BEEF|BEEF CHEEK MEAT|M|BF|BEEF>OFFAL>OFFAL
888091|SHAMROCK PAPER|PAPER BUTCHER PINK 24"X1000'|S|DS|DISPOSABLES>TABLECOVERS/PLACEMATS>BUTCHER PAPER
888100|CACTUS MAT|MAT, FLOOR 2' X 3' CACTUS|E|BS|E&S>JANITORIAL>FLOOR MATTING
888102|ADD BRAND|ORGANIC 4" CORN TORTILLAS|G|EI|DRY GROCERY>CHIPS & SNACKS>TORTILLA CHIP>OTHER
888103|||F|APPETIZERS/HORS D OEUVRES|F/N PREPARED>APPETIZERS (FRIED)>OTHER
888104|||F|DF|BAKERY, FROZEN>DESSERTS>PETIT FOURS & MINI DESSERTS
888105|MR T|BIODEGRADABLE BOX 9" X 9" X 3"|S|CC|DISPOSABLES>BOX & ACCESSORIES>CARRYOUT>BOX
888106|||F|DF|BAKERY, FROZEN>DESSERTS>MOUSSE/FLAN
888107|ROY ROGERS|CUP 40 OUNCE OLYMPIC POLYPROPYLENE|S|TD|DISPOSABLES>CUPS/LIDS/MISC>PLASTIC
888108|||F|DF|BAKERY, FROZEN>DESSERTS>MOUSSE/FLAN
888109|||F|DF|BAKERY, FROZEN>DESSERTS>OTHER
888115|EXCEL|BEEF LOIN BALL TIP SELECT TWO UP FROZEN|M|BF|BEEF>PORTION CONTROL>FROZEN>COMMODITY>VALUE-ADDED>THIN CUT>BALL TIPS
888119|CHURCHS|FLOUR BLEACHED|G|BD|DRY GROCERY>FLOUR>OTHER
888128|PACKER|BISON TERES MAJOR FROZEN|M|MEATS OTHER FRESH~MEATS OTHER FROZEN|GAME>NON-POULTRY>BUFFALO/BISON
888150|LEGACY 72|BEEF SHORT RIB BONELESS CHOICE|M|CM~BF|!BEEF>PORTION CONTROL>FRESH>COMMODITY>REGULAR>CHUCK>SHORT RIBS=BEEF>PORTION CONTROL>FROZEN>COMMODITY>REGULAR>CHUCK>SHORT RIBS
888166|EAGLE RIDGE|BEEF STEAK STRIP BONELESS SELECT CENTER-CUT 1180A|M|BF|BEEF>PORTION CONTROL>FROZEN>COMMODITY>REGULAR>LOIN>STRIP LOIN>CENTER CUT
888203|HOOTERS|HOOTERS T-SHIRT BAG|S|BW|DISPOSABLES>FOOD BAGS>MISCELLANEOUS
888214|||F|BAKERY FROZEN|BAKERY, FROZEN>SANDWICH CARRIERS>SPECIALTY/ARTISAN>THAW & SERVE
888217|BERK|WRAP FOIL SHEET 12X10.75 POP UP|S|BW|DISPOSABLES>FOOD WRAP>FOIL
888240|AMERICAN METALCRAFT|METALCRAFT SPOON, BAKELITE HAND|E|FLATWARE|E&S>KITCHEN SUPPLIES>SMALLWARES>KITCHEN UTENSILS>SPOONS
888251||SERVER BEVERAGE 20 OUNCE OMEGA VACUUM BRUSHED STAINLESS_STEEL|E|TS|E&S>DINING ROOM>PITCHERS/CARAFES
888281|||D|CHEESE|CHEESE & DAIRY>HISPANIC CHEESE>QUESO BLANCO>OTHER
888282|||M|BF|!BEEF>PORTION CONTROL>FROZEN>COMMODITY>REGULAR>RIB>BONELESS>LIP OFF
888290|NATIONAL CHECKING|LABEL, 2" X 3" MONDAY TRILINGUA REMOVABLE|S|DS|DISPOSABLES>MISCELLANEOUS DISPOSABLES>LABELS/TAPE
888291|||G|EI|F/N PREPARED>ENTREES>HISPANIC>BURRITO & CHIMICHANGA
888294|NATIONAL CHECKING|LABEL, 2" X 3" TUESDAY TRILINGU REMOVABLE|S|DS|DISPOSABLES>MISCELLANEOUS DISPOSABLES>LABELS/TAPE
888296|NATIONAL CHECKING|LABEL 2" X 3" WEDNESDAY TRILING REMOVABLE|S|DS|DISPOSABLES>MISCELLANEOUS DISPOSABLES>LABELS/TAPE
888303|||F|DF|BAKERY, FROZEN>DESSERT BARS>BROWNIES
888343|NATIONAL CHECKING|LABEL, 2" X 3" THURSDAY TRILING REMOVABLE|S|DS|DISPOSABLES>MISCELLANEOUS DISPOSABLES>LABELS/TAPE
888344|||F|DF|BAKERY, FROZEN>DESSERT BARS>BROWNIES
888347|||F|DF|BAKERY, FROZEN>DESSERT BARS>BROWNIES
888418|PACKER|YOGURT PLAIN WHOLE MILK DAHI INDIAN STYLE WHOLE MILK PLAIN YOGURT|D|MC|CHEESE & DAIRY>CULTURED DAIRY>YOGURT
888422|||F|POTATOES FROZEN|F/N PREPARED>FROZEN POTATOES>FRENCH FRIES>TRADITIONAL CUT
888435|||C|SKIN CARE|CHEMICALS>SANITIZER>AEROSOL
888439|ADD BRAND|BAG POPCORN FRESH 2# SIZE STADARE PINCH BOTTOM|S|BW|DISPOSABLES>FOOD BAGS>MISCELLANEOUS
888620|||D~F|CHEESE~APPETIZERS BREADED/BATTER|!CHEESE & DAIRY>NATURAL CHEESE>MISCELLANEOUS
888627|GORDON PAPER|BUTCHER PAPER 30#24X30 WHITE S|S~E|DS~DE|DISPOSABLES>TABLECOVERS/PLACEMATS>BUTCHER PAPER
888669||FULLY-COOKED SHREDDED CORNED BEEF|M|BF|BEEF>CORNED BEEF>COOKED
888680|||G|SC|DRY GROCERY>CHIPS & SNACKS>OTHER
888691|PACKER|BEEF CHUCK SEMI BONELESS CHOICE NECK OFF REFRIGERATED|M|BR|BEEF>BOXED BEEF>FRESH>CHUCK>BONELESS
888693|TORO|BAG PAPER BROWN|S|BW|DISPOSABLES>FOOD BAGS>PAPER
888715|TORO|BAG PAPER BROWN WITH HANDLE|S|BW|DISPOSABLES>FOOD BAGS>PAPER
888717|||M|PF~DR|PORK>BACON>BITS
888743|SPINX|EGGS HARD BOILED PEELED AND READY|R|DELI SALADS|CHEESE & DAIRY>SPECIALTY EGG PRODUCTS>PRECOOKED
888768|MASECA||G|BD|DRY GROCERY>FLOUR>WHITE>HOTEL
888805|BURGER KING|PREM 24 SBOB#1 DOMESTIC RED PARTICK/SQUIDWARD|X|MU|DISPOSABLES>MISCELLANEOUS DISPOSABLES>HOLIDAY/SPECIALTY
888825||CLASSIC MANGO|B|BX|!BEVERAGES>SMOOTHIE BASE>FRUIT CONCENTRATES
888850|BURGER KING|PREM 24 SBOB#2 DOMESTIC BLUE SPONGEBOB/GARY|X|MU|DISPOSABLES>MISCELLANEOUS DISPOSABLES>HOLIDAY/SPECIALTY
888880|BURGER KING|PREM 24 SBOB #3 DOMESTIC PURPLE SANDY/PLANKTON|X|MU|DISPOSABLES>MISCELLANEOUS DISPOSABLES>HOLIDAY/SPECIALTY
888884||CLASSIC PINEAPPLE BLEND|B|BX|BEVERAGES>BAR MIXES>SOUR MIX
888900|IBP|2PC BONELESS ROUND REFRIGERATED|M|BR|BEEF>BOXED BEEF>FRESH>ROUND>INSIDE
888914|PACKER|ONION RED SLAB 1/4" 4/5 LB. ONION RED SLAB 1/4" 4/5 LB.|O~OC|VF~VP|PRODUCE>FRESH VEGETABLES>ONIONS>VALUE ADDED>RED
888925||CREAM BASE|B|BX|BEVERAGES>BAR MIXES>SOUR MIX
888968|POPEYES|3/8" SHREDDED ROMAINE|O|VF|PRODUCE>FRESH VEGETABLES>LETTUCE>VALUE ADDED>SHREDDED & CHOPPED>SHRED
888971|EDLUND|OPENER CAN MANUAL STAINLESS_STEEL BASE MOUNTED|E|POTS/PANS/UTENSILS|E&S>KITCHEN SUPPLIES>SMALLWARES>OPENERS
888979|||E|CHINA|E&S>DINING ROOM>DINNERWARE>CHINA>UNDECORATED
888981|||E|CHINA|E&S>DINING ROOM>DINNERWARE>CHINA>UNDECORATED
888988|PERFORMANCE CUSTOM M|BEEF KNUCKLE SLICED 5END_ALL|M|CM~CF|!BEEF>BOXED BEEF>FRESH>ROUND>KNUCKLE
888998|IBP|PORK SHOULDER CUSHION BONELESS|M|PF|PORK>BOXED PORK>FROZEN>SHOULDER
889004|ALBANY PACKAGING|CAKE CARTON 9X9X2.5|S|CC|DISPOSABLES>BOX & ACCESSORIES>BAKERY>CAKE
889034|||F|FRUITS FROZEN|CANNED & FROZEN FRUIT & VEG>CANNED COMMODITIES>FRUIT>OTHER
889064|DAYDOTS|TEST STRIP SANITIZER AMMONIA|C|FOOD SAFETY & KITCHEN CLN|CHEMICALS>SANITIZER>TEST KITS
889115|ECOLAB|TEST STRIP CHLORINE HIGH RANGE 0-1000PPM|C|FOOD SAFETY & KITCHEN CLN|CHEMICALS>SANITIZER>TEST KITS
889134|PACKER|BEEF CHUCK CLOD BONELESS|M|BR|BEEF>BOXED BEEF>FRESH>CHUCK>CLOD
889151|FARMLAND|PORK BOSTON BUTT BONE-IN|M|PF|PORK>BOXED PORK>FROZEN>BUTT
889152|||D|CHEESE|CHEESE & DAIRY>NATURAL CHEESE>BLUE/GORGONZOLA>CHUNKS
889156|AXE|AXE AIR FRESH MINI VENT CLIP PHNIX 1PK|X|MU|E&S>SUPPLIES, MISCELLANEOUS>MISC
889161|GALBANI|CHEESE MOZZARELLA BOCCONCINI 2OZ FROZEN IN WATER TUB|D|CHEESE|CHEESE & DAIRY>ITALIAN CHEESE>MOZZARELLA>SHREDS, DICED
889193|||G|SC|DRY GROCERY>CHIPS & SNACKS>OTHER
889252|||G|SPICE/EXTRACT/FOOD COLOR|DRY GROCERY>SALT & PEPPER>PEPPER>PEPPERCORN
889261|||M|DR|PORK>HOT DOGS>FRESH>PORK, BEEF
889274|GODFATHERS PIZZA|STRAWBERRY PIE BITES STRAWBERRY PIE BITES|F|DF|BAKERY, FROZEN>DESSERTS>PETIT FOURS & MINI DESSERTS
889283|HOFFMASTER|NAPKIN BEVERAGE WHT 3PLY EMBOSSED BEVERAGE REGAL 4.75"|S|NT|DISPOSABLES>NAPKINS>BEVERAGE
889286|TRENCHERS FARMHOUSE|PASTA FRESH VEGAN GNOCCHETTI SARDI|R|PASTA REFRIGERATED|COMMODITY GROCERY>DRY PASTA & NOODLES>PASTA>OTHER
889289|TORK|DISPENSER TOWEL CENTERFED|E|DE|E&S>DISPENSERS>TOWEL
889291|||D|CHEESE|F/N PREPARED>APPETIZERS (FRIED)>CHEESE
889292|PACKER|JUICE, LIME FRESH SQUEEZE 1 GAL JUICE, LIME FRESH SQUEEZED 1 GAL|J~B|JUICES FRESH~BEVERAGE REFRIG|!BEVERAGES>JUICES>CITRUS JUICE
889295|T. MARZETTI|DRESSING COUNTRY FRENCH BOTTLE|G|MD|COMMODITY GROCERY>CONDIMENTS>FLAVORED DRESSING>FRENCH
889314|WALLYS|WALLYS CHIP BAG 3.37X2.5X6.7|S|BW|DISPOSABLES>FOOD BAGS>MISCELLANEOUS
889326|PACKER|BEEF CHUCK BONE-IN SHORT RIB|M|BR|!BEEF>PORTION CONTROL>FRESH>COMMODITY>REGULAR>CHUCK>SHORT RIBS
889341|PACTIV|CIRCLE FOAM CAKE 8.25"|S|CC|DISPOSABLES>BOX & ACCESSORIES>BAKERY>CAKE CIRCLE
889342|PACKER|BEEF RND_TOP INSIDE ROUND BONELESS|M|BR|BEEF>BOXED BEEF>FRESH>ROUND>INSIDE
889344||SAUSAGE HICKORY SMOKED IN CLOTH|M|PF|PORK>BREAKFAST SAUSAGE>FROZEN>BULK
889354|ADD BRAND|CONTAINER PAPER 16 OUNCE SUGAR BABY|S|CC|DISPOSABLES>CONTAINERS/TO GO>PAPER>CARRY OUT
889358|ADD BRAND|CONTAINER PAPER EIGHT OUNCE SUGAR BABY|S|CC|DISPOSABLES>CONTAINERS/TO GO>PAPER>CARRY OUT
889360|SAVOR BRAND DOT|PASTE GOCHUJANG KOREAN HOT PEPPER|G|SP|COMMODITY GROCERY>CONDIMENTS>SAUCES>ASIAN>SPECIALTY
889361|ADD BRAND|CHEF TABLE SELECT BONELESS RIBEYE CHEF TABLE SELECT BONELESS RIBEYE|M|BF~AF|!BEEF>BOXED BEEF>FROZEN>RIBS>BONELESS
889363|PACKER|SHRIMP PANKO BREADED 13/15 XTRA BREADED 100PER CASE|A|SF|!SEAFOOD>CRUSTACEAN>SHRIMP>BREADING
889365|PACKER|OCTOPUS LEGS COOKED FROZEN WILD SPAIN|A|SF|!SEAFOOD>MOLLUSK>OCTOPUS
889373|LA SUPERIOR FOODS||G|EI|DRY GROCERY>CHIPS & SNACKS>TORTILLA CHIP>YELLOW
889381|PACKER|CHICKEN STRIP JULIENNE 2" 1/4" X 1/2"|P|CHICKEN FRESH|!POULTRY>CHICKEN>COMMODITY>FRESH / CVP>STRIPS
889383|MIDDENDORF|BEEF RIBEYE STEAK CHOICE BONE-IN|M|CM|BEEF>PORTION CONTROL>FRESH>COMMODITY>REGULAR>RIB>BONE IN
889388|PALM PIZZA|BOX PIZZA 8IN WHITE ON KRAFT B FLUTE|S|CC|DISPOSABLES>BOX & ACCESSORIES>PIZZA>PIZZA BOX
889389|PALM PIZZA|BOX PIZZA 12" WHITE ON KRAFT B FLUTE|S|CC|DISPOSABLES>BOX & ACCESSORIES>PIZZA>PIZZA BOX
889390|PALM PIZZA|BOX PIZZA 16" WHITE ON KRAFT B FLUTE|S|CC|DISPOSABLES>BOX & ACCESSORIES>PIZZA>PIZZA BOX
889391|PALM PIZZA|BOX PIZZA 18" WHITE ON KRAFT B FLUTE|S|CC|DISPOSABLES>BOX & ACCESSORIES>PIZZA>PIZZA BOX
889392|||A~G|SEAFOOD CANNED/DRY|DRY GROCERY>CANNED FISH & POULTRY>TUNA>ALBACORE
889393|||F|ES|F/N PREPARED>BREAKFAST>BREAKFAST SANDWICH/WRAP
889395|SHAKE SHACK|DATE POWDER|G|BD|DRY GROCERY>BAKING INGREDIENTS>BAKING SODA/POWDER
889396|||F|ES|F/N PREPARED>BREAKFAST>BREAKFAST SANDWICH/WRAP
889398|MELLOW MUSHROOM|MEATBALLS BEEF CHICK FULLY-COOKED 1OZ|F|APPETIZERS/HORS D OEUVRES|RETAIL>PROCESSED MEAT>FROZEN MEATBALLS
889399|||G|EI|DRY GROCERY>SPICE, HERBS, EXTRACTS & OTHERS>SPICES, SEASONINGS & HERBS>SPICE
889431|ZAXBYS|BAKERS HARVEST VANILLA WAFERS|G|BAKERY DRY~SC|!BAKERY, DRY>WAFERS
889432|BLACK RIVER MEATS|PORK CHEEK MEAT 3.5 LB AVERAGE|M|PF|!PORK>OFFAL>OFFAL
889441|THE SAFETY ZONE|GLOVE, SMALL, BLUE STRETCH BLUE MICROTEXTURED STRETCH HYBRID|S|DS|!DISPOSABLES>GLOVES>POLY
889442|MCCORMICK||G|SP|COMMODITY GROCERY>CONDIMENTS>SAUCES>MARINADES
889488|AMERICAN FOODS GROUP|BEEF RIB LIFTER MEAT CHOICE BONELESS 15 PIECES PER BAG|M|BR~BF|!BEEF>BOXED BEEF>FRESH>RIBS>BONELESS
889521|WOLVERINE|BEEF TENDERLOIN CHAIN FROZEN|M|BF|BEEF>BOXED BEEF>FROZEN>LOIN>TENDERLOIN
889525|PACKER|CHICKEN THIGH DICED 1/4"|P|CHICKEN FROZEN|POULTRY>CHICKEN>FURTHER PROCESSED>GROUND, PULLED, DICED, SHREDDED
889569|ACORN|LID PLASTIC DOME 12-24 OUNCE PET|S|TD|DISPOSABLES>CUPS/LIDS/MISC>PLASTIC
889575|ZERO|BEEF PHILADELPHIA STEAK SIRLOIN 3OZ BEEF PHILADELPHIA STEAK SIRLOIN PREMIUM 3OZ|M|BF|BEEF>PORTION CONTROL>FROZEN>PHILLY STEAK
889602|WEST CREEK|BACON SLICED THIN FULLY-COOKED|M|DR~DM|PORK>BACON>FULLY COOKED
889618|||F|IC|CHEESE & DAIRY>FROZEN DAIRY>NOVELTIES>CUPS
889622|THE SAFETY ZONE|GLOVE, XL, BLUE STRETCH HYBRID|S|DS|DISPOSABLES>GLOVES>MISCELLANEOUS/OTHER
889652|||F|PASTA FROZEN|F/N PREPARED>FROZEN PASTA>RAVIOLI>TRADITIONAL
889664|CERVASI|SAUCE ALFREDO COOLER|R|SAUCES/BASES REFRIG|COMMODITY GROCERY>CONDIMENTS>SAUCES>ITALIAN>ALFREDO & WHITE SAUCE
889670|PACKER|BEEF BALL TIP CHOICE TWO UP|M|BR|!BEEF>PORTION CONTROL>FRESH>COMMODITY>REGULAR>THIN CUT>BALL TIPS
889683|||F|ES|COMMODITY GROCERY>RICE>PARBOIL
889686|PACKER|BEEF OXTAIL PORTION TWO IN FROZEN|M|BF|!BEEF>PORTION CONTROL>FROZEN>COMMODITY>REGULAR>OX TAIL
889688|PACKER|FRUIT CUP FRESH FOUR MIX PINEAPPLE, WATERMELON, GRAPE, STRAWBERRY|OC|FRUIT PRE-CUT|PRODUCE>CUT FRUIT>DRY PACK>MIXED FRUIT>PORTION CONTROL
889689|DRINKWISE|WINE GLASS PLASTIC 12 OUNCE|E|GLASSWARE|E&S>DINING ROOM>GLASSWARE>PLASTIC (REUSABLE)
889690|REVOLUTION|BEER GLASS 16 OUNCE|E|GLASSWARE|E&S>DINING ROOM>GLASSWARE>GLASS
889704|OREO|OREO AND SOUR PATCH KID SHIPPER EIGHT OREO AND SOUR PATCH KID SHIPPER 82CT|G|SC|DRY GROCERY>CHIPS & SNACKS>OTHER
889705|||G|SP|DRY GROCERY>SOUP BASES & MIX>BASE
889762|TILLAMOOK|VANILLA CHOCOLATE CHIP VANILLA CHOCOLATE CHIP ICE CREAM|F|IC|CHEESE & DAIRY>FROZEN DAIRY>ICE CREAM
889766|PARLOUR|DRESSING PEPPERCORN RANCH|G|MD|COMMODITY GROCERY>CONDIMENTS>FLAVORED DRESSING>RANCH
889783|BRAVEHEART|BEEF TOP BLADE CHOICE ANGUS 114D 1.5UP FLTIRN BONELESS REFRIGERATED|M|BEEF ANGUS CCM FRESH|BEEF>PORTION CONTROL>FRESH>PREMIUM>REGULAR>CHUCK>FLAT IRON
889787|WALLYS|WALLYS POPCORN BAG BLUE 4.75X2.5X8.3|S|BW|DISPOSABLES>FOOD BAGS>MISCELLANEOUS
889796|PACKER|BEEF PATTY 4/1 WIDE 75/25|M|BR|BEEF>GROUND BEEF PATTIES>FRESH>REGULAR>COMMODITY
889798|REYELINE|BOWL PLASTIC 12 OUNCE SALAD BLACK PET|S|TD|DISPOSABLES>TABLEWARE>BOWLS>PLASTIC
889801|REYELINE|BOWL PLASTIC 16 OUNCE SALAD BLACK PET|S|TD|DISPOSABLES>TABLEWARE>BOWLS>PLASTIC
889807|||G|PASTA DRY|COMMODITY GROCERY>DRY PASTA & NOODLES>PASTA>MACARONI
889834|REYELINE|BOWL PLASTIC 48 OUNCE SALAD BLACK PET|S|TD|DISPOSABLES>TABLEWARE>BOWLS>PLASTIC
889836|DART|WING BARN 90HT1|S|CC|DISPOSABLES>CONTAINERS/TO GO>FOAM>HINGED
889838|REYELINE|LID FLAT FITS 48 OUNCE CLEAR PET|S|TD|DISPOSABLES>CUPS/LIDS/MISC>PLASTIC
889857|REYELINE|LID FLAT FITS 64 OUNCE CLEAR PET|S|TD|DISPOSABLES>CUPS/LIDS/MISC>PLASTIC
889859|VERLASSO|SALMON FILLET 3-4 LB SKIN-ON D TRIM ATLANTIC CHILE FARMED FROZEN|A|SF|SEAFOOD>FISH>FROZEN>FINFISH>SALMON>FILLET>FARM RAISED
889865|REYELINE|BOWL HIGH PROFESSIONAL 80 OUNCE 10" BLACK|S|TD|DISPOSABLES>TABLEWARE>BOWLS>PLASTIC
889909|DART|CUP FOAM 20 OZ TRIPLE NICKEL|S|TD|DISPOSABLES>CUPS/LIDS/MISC>FOAM
889927|PACKER|CLEAR POLY AND VENTED BAGS 6X3|S|BW|DISPOSABLES>FOOD BAGS>PLASTIC
889936|SUPERIOR FRESH|ASIAN SELECT SALAD 4/1 LB|O~OC|VF~VP|!PRODUCE>FRESH VEGETABLES>VALUE ADDED>VEGETABLE BLENDS
889947|PACKER|CLEAR POLY VENTED BAGS 8X4X18|S|BW|DISPOSABLES>FOOD BAGS>PLASTIC
889949|PACKER|CLEAR POLY VENTED BAGS 8X4X18|S|BW|DISPOSABLES>FOOD BAGS>PLASTIC
889950|PACKER|CLEAR POLY VENTED BAGS 10X8X24|S|BW|DISPOSABLES>FOOD BAGS>PLASTIC
889973|||G|SPICE/EXTRACT/FOOD COLOR|DRY GROCERY>SPICE, HERBS, EXTRACTS & OTHERS>SPICES, SEASONINGS & HERBS>SEASONING/BLEND>ALL OTHER
889984|||B|BP|BEVERAGES>JUICES/DRINKS>SINGLE SERVE
889986|||F|BAKERY FROZEN|SEAFOOD>CRUSTACEAN>SHRIMP>SPECIALTY VALUE ADDED
889996|||B|BP|BEVERAGES>JUICES/DRINKS>SINGLE SERVE
890009|PACKER|WHITE BUTCHER ROLL 12X1000|S|DS|DISPOSABLES>TABLECOVERS/PLACEMATS>BUTCHER PAPER
890012|PACKER|WHITE BUTCHER ROLL 15X1000|S|DS|DISPOSABLES>TABLECOVERS/PLACEMATS>BUTCHER PAPER
890037|||E|BS|E&S>BAR SUPPLIES>MISCELLANEOUS
890083|||R|DELI SALADS|PRODUCE>WET SALAD>SLAW
890144|PACKER|MANGO DICED INDIVIDUALLY_QUICK_FROZEN 3/8" 30#|F|FRUITS FROZEN|CANNED & FROZEN FRUIT & VEG>FROZEN COMMODITIES>FRUIT>MANGO
890150|PACKER|PINEAPPLE DICED INDIVIDUALLY_QUICK_FROZEN 3/8" 30#|FF~F|FRUIT IQF~FRUITS FROZEN|!CANNED & FROZEN FRUIT & VEG>FROZEN FRUIT>OTHER
898095|GALARDI|WRAP WIENERSCHNITZEL ALL|S|BW|DISPOSABLES>FOOD WRAP>MISCELLANEOUS
899187|STERLING SILVER|BEEF CLOD HEART CHUCK CHOICE BONELESS|M|BF|BEEF>BOXED BEEF>FROZEN>CHUCK>CLOD
899195|PACKER|PAD PIZZA 16X16 SINGLE FACE WHITE|S|DS|DISPOSABLES>BOX & ACCESSORIES>PIZZA>PIZZA CIRCLES
899202|FARMINGTON GARDENS|NAPKIN 10X10 1/4 FOLD EMBOSSED|S|NT|!DISPOSABLES>NAPKINS>DINNER
899205|ELKAY PLASTICS|12"X18" POLY VACUUM POUCH 12X18" VACUUM POUCH BOIL&FREEZE|S|BW~DS|DISPOSABLES>FOOD BAGS>PLASTIC
899206|MIDDENDORF|BEEF TENDERLOIN FILLET BONE-IN PRIME|M|CM|BEEF>PORTION CONTROL>FRESH>PREMIUM>REGULAR>LOIN>TENDERLOIN>BONE-IN
899208|||F|ETHNIC ITEMS FROZEN|COMMODITY GROCERY>DRY PASTA & NOODLES>NOODLES
899221|PERFORMANCE CAB|BEEF CERTIFIED_ANGUS_BEEF STRIP STEAK PRIME CENTER-CUT BONELESS ANTIBIOTIC_FREE RFF|M|BEEF ANGUS CCM FRESH|BEEF>PORTION CONTROL>FRESH>PREMIUM>REGULAR>LOIN>STRIP LOIN>CENTER CUT
899237|||M|BR|!BEEF>GROUND BEEF PATTIES>FRESH>ANGUS>VALUE-ADDED
899250|KNORR|CALDO DE POLLO PAIL|G|SP|COMMODITY GROCERY>CONDIMENTS>SAUCES>SPECIALTY
899340|||CO~G|JAMS & SPREADS~HONEY/JELLY/SPREADS/SYRUP|!FOOD & BEVERAGES>CONDIMENTS & SAUCES>JAMS & SPREADS
899341|WORLD CENTRIC|TRAYS #COMPOSTABLE|S|CC|DISPOSABLES>CONTAINERS/TO GO>PAPER>FOOD TRAY
899346|MIDDENDORF|BEEF INSIDE ROUND DENUDED SLICED THREE MILLIMETER|M|CM|BEEF>PORTION CONTROL>FRESH>COMMODITY>REGULAR>ROUND
899363|BETTER EARTH|CUP HOT FOUR OUNCE SINGLE WALL POLY_LACTIC_ACID COMPOSTABLE|S|TD|DISPOSABLES>CUPS/LIDS/MISC>PAPER
899386|TURANO|DELI 8" SOFT SUB HINGED|F|BAKERY FROZEN|BAKERY, FROZEN>BREADS>SANDWICH/PULLMAN>THAW & SERVE
899437|PERFORMANCE CUSTOM M|BEEF RIBEYE STEAK BONELESS FROZEN PACKED TWO PIECES PER CRYO|M|CF|!BEEF>PORTION CONTROL>FROZEN>COMMODITY>REGULAR>LOIN>RIBEYE
899450|PACKER|MONKFISH TAIL 2-4 LBS PREVIOUSLY FROZEN|A|SF~SEAFOOD FRESH|!SEAFOOD>FISH>FROZEN>GROUNDFISH>MONKFISH
899452|PACKER|CRAB MEAT JONAH LEG BODY 60/40 WILD CAUGHT|A|SEAFOOD FRESH|SEAFOOD>CRUSTACEAN>CRAB>CRAB MEAT OTHER
899466|CORNNUTS|12/4Z CRNTS KCKN DILL PCK 12/4Z CRNTS KCKN DILL PCK|G|SC|DRY GROCERY>CHIPS & SNACKS>OTHER
899469|TILLAMOOK|ORANGE SHERBET ICE CREAM|F|IC|CHEESE & DAIRY>FROZEN DAIRY>ICE CREAM
899484||BEVERAGE TANGERINE ORANGE SPARKLING|B|BP|BEVERAGES>CARBONATED BEVERAGES>CANS
899522|STEELITE|PLATE COUP 6" SAND EMBOSSED CHE|E|TS|E&S>DINING ROOM>DINNERWARE>CHINA>PATTERNED
899526|PACKER|GROUND BEEF ANGUS PATTY 2/1 SMASH|M|AF|BEEF>GROUND BEEF PATTIES>FRESH>ANGUS>COMMODITY
899539|LEGACY 72|SIRLOIN CAP 2.5 UP BONELESS CHOICE|M|CM|BEEF>PORTION CONTROL>FRESH>COMMODITY>REGULAR>LOIN>SIRLOIN>REGULAR
899641|PACKER|GROUND BEEF ANGUS PATTY SMASH|M|AF|BEEF>GROUND BEEF PATTIES>FRESH>ANGUS>COMMODITY
899643|BUNZL|9" MOLDED FIBER PLATE|S|TD|DISPOSABLES>TABLEWARE>PLATES>PAPER
899658|||G|SOUPS CANNED/MIX|DRY GROCERY>SOUP, CHILI, BROTH, STOCK, STEW & CANNED MEAT>SOUP & CHILI
899671|||G|BD|DRY GROCERY>DRY BAKING MIX>BREADS & ROLLS
899716|PACKER|ONION YELLOW SLAB 1/8"|O~OC|VF~VP|PRODUCE>FRESH VEGETABLES>ONIONS>VALUE ADDED>YELLOW
899860|||M|BR|BEEF>BOXED BEEF>FRESH>LOIN>BOTTOM LOIN
899866|PACKER|SKATE WINGS 1-2 SKINLESS|A|SF|!SEAFOOD>FISH>FROZEN>FLATFISH>SKATE
899872|TABLECRAFT|SHAKER SALT&PEPPER 3 OZ GLASS ROUND STAINLESS_STEEL TOP|E|TS|!E&S>SALT & PEPPER>SHAKERS
899879|PACKER|GROUND BEEF ANGUS PATTY 3/1 SMASH|M|AF|BEEF>GROUND BEEF PATTIES>FRESH>ANGUS>COMMODITY
899888|HATFIELD|PORK BOSTON BUTT BONE-IN VACUUM-PACKED THREE BAG OF TWO|M|PF|PORK>BOXED PORK>FROZEN>BUTT
899931|EL CASERO|SAUSAGE LINK CHORIZO COLUMBIAN FRZ|M|DM|PORK>DINNER SAUSAGE>FROZEN>RAW
899933|PACKER|GROUND BEEF ANGUS PATTY 4/1 SMASH|M|BEEF ANGUS FROZEN~AF|!BEEF>GROUND BEEF PATTIES>FROZEN>ANGUS>COMMODITY
899934|SERVICE IDEAS|STAINLESS_STEEL HANDS FREE SLIM TEA URN|E|DE|E&S>DINING ROOM>COFFEE/TEA SERVICE
899995|H&H FOODS|STRAWBERRY SHORTCAKE MULTIPLE USE|G|DESSERT MIXES & TOPPINGS|DRY GROCERY>DESSERT TOPPINGS/CONES>TOPPING SYRUPS`.split('\n');

const HEAD = '859 2807 1333 1280 1174 2851 1174 1229 1280 1280 1231 494 2604 832 87 1179 1473 1305 2832 81/1669 2321 2569/2654 2321 2321 397 1533 1782/1179 1166 1428/2808 807 1454 807 321 1262 2847 99 604 1421 1288 1421 1527 1392 2540 2028 426/1842 2569 1782 1993'.split(' ');
const TAIL = '2257 nan/147 nan/482 1049 2737 286 2425/1049 2498 2248'.split(' ');
const known = {};
const hash = s => { let h = 7; for (const c of s) h = (h * 31 + c.charCodeAt(0)) % 99991; return 240 + h % 2600; };
const merge = (a, b) => { const w = b.split(' '); return b + ' ' + a.split(' ').filter(x => !w.includes(x)).join(' '); };
const arrows = s => s.replace(/>/g, '->');
const esc = s => s.replace(/&/g, '&amp;').replace(/</g, '&lt;').replace(/>/g, '&gt;');
const cell = (t, c) => '<span' + (c ? ' class="' + c + '"' : '') + '>' + esc(String(t)) + '</span>';
const pair = (v, map) => v.split('~').map(x => map[x] || x);

document.getElementById('rows').innerHTML = DATA.map((line, i) => {
  const [id, brand, name, cls, pbh, hier] = line.split('|');
  const [c1, c2 = c1] = pair(cls, CLASS), [p1, p2 = p1] = pair(pbh, PBH);
  const bad = hier[0] === '!';
  let [h1, h2 = h1] = hier.replace('!', '').split('=').map(arrows);
  const t = i - (DATA.length - TAIL.length);
  const code = HEAD[i] || TAIL[t] || (bad ? hash(h1) + '/' + hash(h1 + id) : String(known[h1] || hash(h1)));
  const [m, o = m] = code.split('/');
  if (!bad) known[h1] = m;
  const pc = c1 !== c2, pp = p1 !== p2, tf = b => b ? 'FALSE' : 'TRUE';
  const pk = b => b ? 'p' : '';
  const diff = m !== o ? o + '.0 ' + m : o + '.0 \u2013 ' + m;
  return '<div class="r">' + cell(i + 2, 'n') + cell(id, 'k') + cell(brand) + cell(name)
    + cell(c1, pk(pc)) + cell(pc ? merge(c1, c2) : c1) + cell(c2, pk(pc))
    + cell(p1, pk(pp)) + cell(pp ? merge(p1, p2) : p1) + cell(p2, pk(pp))
    + cell(h1, pk(bad)) + cell(h1 === h2 ? h1 : merge(h1, h2)) + cell(h2, pk(bad))
    + cell(m, 'p k t') + cell(diff, m === o ? 'k w' : 'k') + cell(o + '.0', 'k o t')
    + cell(tf(pc), 'c') + cell(tf(pp), 'c') + cell(tf(bad), 'c') + cell('FALSE', 'c') + cell('TRUE', 'c p')
    + cell('TRUE', 'c') + cell('TRUE', 'c') + cell(tf(m === 'nan'), 'c')
    + cell((pc ? 'Class_Name, ' : '') + (pp ? 'PBH, ' : '') + (bad ? 'Analytical_Hierarchy, ' : '') + 'Analytical_Hierarchy_CD, Missing Analytical_Hierarchy_CD', 'x') + '</div>';
}).join('');

const letters = ['', ...'ABCDEFGHIJKLMNOPQRSTUVWXYZ', 'AA', 'AB', 'AC'];
document.getElementById('cols').innerHTML = letters.map(l => cell(l, l === 'X' ? 'sel' : '')).join('');
const names = 'Item_Number|Brand_Name|Long_Product_Name|Class_Name_predicted|Class_Name_Diff|Class_Name_actual|PBH_predicted|PBH_Diff|PBH_actual|Analytical_Hierarchy_predicted|Analytical_Hierarchy_Diff|Analytical_Hierarchy_actual|Analytical_Hierarchy_CD_predicted|Analytical_Hierarchy_CD_Diff|Analytical_Hierarchy_CD_actual|Class_Name_Match|PBH_Match|Analytical_Hierarchy_Match|Analytical_Hierarchy_CD_Match|Analytical_Hierarchy_CD_Not_In_Hierarchy_File|Class_In_Reference|PBH_In_Reference|Hierarchy_In_Reference|Mismatch_Type'.split('|');
document.getElementById('names').innerHTML = '<div class="n">1</div>' + names.map(n => '<div><em>' + n + '</em><s></s></div>').join('') + '<div></div>';
```
